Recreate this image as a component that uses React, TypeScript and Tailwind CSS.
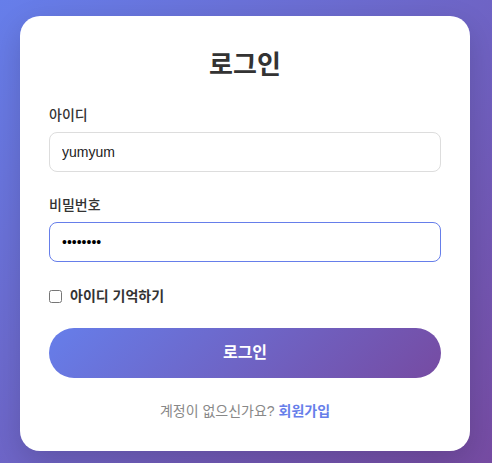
export default function App() {
  return (
    <div
      className="min-h-screen w-full bg-[linear-gradient(135deg,#667eea_0%,#764ba2_100%)] px-5 pt-4 pb-4"
      style={{ fontFamily: '"Liberation Sans", "Noto Sans CJK KR", sans-serif' }}
    >
      <div className="w-[450px] rounded-[20px] bg-white px-[29px] pt-[31px] pb-[29px] shadow-[0_10px_30px_rgba(0,0,0,0.15)]">
        <h1 className="mb-[22px] text-center text-[26px] leading-[36px] font-bold text-[#333]">로그인</h1>

        <div className="mb-[23px]">
          <label className="mb-1.5 block text-sm leading-[21px] font-medium text-[#333]">아이디</label>
          <input
            type="text"
            defaultValue="yumyum"
            className="block h-10 w-full rounded-lg border border-[#ddd] px-3 text-sm text-[#222] outline-none"
          />
        </div>

        <div className="mb-6">
          <label className="mb-1.5 block text-sm leading-[21px] font-medium text-[#333]">비밀번호</label>
          <input
            type="password"
            defaultValue="password"
            className="block h-10 w-full rounded-lg border border-[#667eea] px-3 text-sm text-black outline-none"
          />
        </div>

        <label className="mb-[21px] flex items-center gap-2 text-sm leading-[21px] font-bold text-[#333]">
          <input type="checkbox" className="h-[13px] w-[13px]" />
          아이디 기억하기
        </label>

        <button className="h-[50px] w-full rounded-full bg-[linear-gradient(135deg,#667eea_0%,#764ba2_100%)] text-base font-bold text-white">
          로그인
        </button>

        <p className="mt-[23px] text-center text-sm leading-[21px] text-[#888]">
          계정이 없으신가요? <span className="font-bold text-[#667eea]">회원가입</span>
        </p>
      </div>
    </div>
  );
}
